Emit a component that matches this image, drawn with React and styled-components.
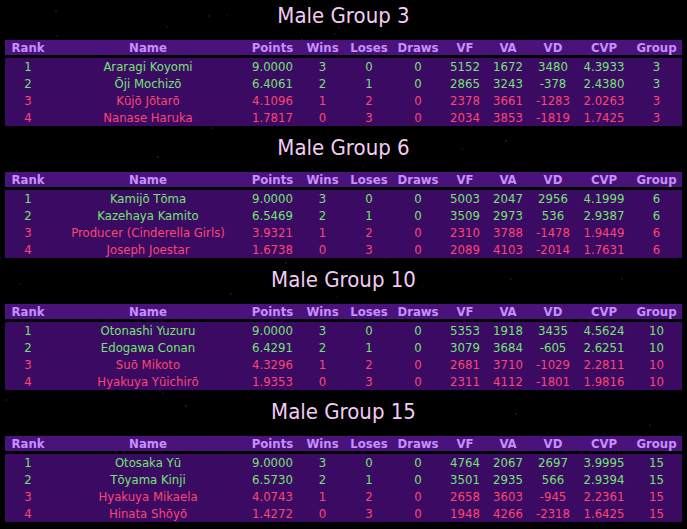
import React from 'react'
import styled, { createGlobalStyle } from 'styled-components'

// faint star dots for the page background
const stars = (() => {
  let seed = 7
  const rnd = () => {
    seed = (seed * 9301 + 49297) % 233280
    return seed / 233280
  }
  const dots = []
  for (let i = 0; i < 110; i++) {
    const x = Math.round(rnd() * 687)
    const y = Math.round(rnd() * 529)
    const a = (0.15 + rnd() * 0.35).toFixed(2)
    dots.push(
      `radial-gradient(circle at ${x}px ${y}px, rgba(200,200,220,${a}) 0, rgba(200,200,220,0) 1px)`,
    )
  }
  return dots.join(',')
})()

const GlobalStyle = createGlobalStyle`
  html, body {
    margin: 0;
    padding: 0;
    background-color: #000;
  }
  body {
    min-height: 529px;
    background-image: ${stars};
    font-family: 'DejaVu Sans Condensed', 'DejaVu Sans', sans-serif;
  }
`

//#region styles
const Page = styled.div`
  width: 687px;
  display: flex;
  flex-direction: column;
`

const Section = styled.section`
  display: flex;
  flex-direction: column;
  align-items: center;
  margin-bottom: 6px;
`

const Title = styled.h2`
  margin: 0 0 8px;
  height: 32px;
  line-height: 32px;
  font-size: 22px;
  font-weight: normal;
  color: #f3cbf3;
  text-align: center;
`

const Table = styled.table`
  width: 677px;
  table-layout: fixed;
  border-collapse: separate;
  border-spacing: 0;
  font-size: 13px;
  text-align: center;
`

const Head = styled.th`
  height: 15px;
  line-height: 15px;
  padding: 0;
  font-weight: bold;
  color: #c68ffb;
  background: #4a137c;
  border-bottom: 3px solid #000;
  white-space: nowrap;
`

const Row = styled.tr`
  color: ${(p) => (p.$up ? '#76e276' : '#fc4674')};
`

const Cell = styled.td`
  height: 17px;
  line-height: 17px;
  padding: 0;
  background: #3b0a62;
  white-space: nowrap;
`
//#endregion

const columns = [
  ['Rank', 46],
  ['Name', 194],
  ['Points', 55],
  ['Wins', 45],
  ['Loses', 48],
  ['Draws', 50],
  ['VF', 44],
  ['VA', 42],
  ['VD', 48],
  ['CVP', 54],
  ['Group', 51],
]

const groups = [
  {
    id: 3,
    rows: [
      ['Araragi Koyomi', '9.0000', 3, 0, 0, 5152, 1672, 3480, '4.3933'],
      ['Ōji Mochizō', '6.4061', 2, 1, 0, 2865, 3243, -378, '2.4380'],
      ['Kūjō Jōtarō', '4.1096', 1, 2, 0, 2378, 3661, -1283, '2.0263'],
      ['Nanase Haruka', '1.7817', 0, 3, 0, 2034, 3853, -1819, '1.7425'],
    ],
  },
  {
    id: 6,
    rows: [
      ['Kamijō Tōma', '9.0000', 3, 0, 0, 5003, 2047, 2956, '4.1999'],
      ['Kazehaya Kamito', '6.5469', 2, 1, 0, 3509, 2973, 536, '2.9387'],
      ['Producer (Cinderella Girls)', '3.9321', 1, 2, 0, 2310, 3788, -1478, '1.9449'],
      ['Joseph Joestar', '1.6738', 0, 3, 0, 2089, 4103, -2014, '1.7631'],
    ],
  },
  {
    id: 10,
    rows: [
      ['Otonashi Yuzuru', '9.0000', 3, 0, 0, 5353, 1918, 3435, '4.5624'],
      ['Edogawa Conan', '6.4291', 2, 1, 0, 3079, 3684, -605, '2.6251'],
      ['Suō Mikoto', '4.3296', 1, 2, 0, 2681, 3710, -1029, '2.2811'],
      ['Hyakuya Yūichirō', '1.9353', 0, 3, 0, 2311, 4112, -1801, '1.9816'],
    ],
  },
  {
    id: 15,
    rows: [
      ['Otosaka Yū', '9.0000', 3, 0, 0, 4764, 2067, 2697, '3.9995'],
      ['Tōyama Kinji', '6.5730', 2, 1, 0, 3501, 2935, 566, '2.9394'],
      ['Hyakuya Mikaela', '4.0743', 1, 2, 0, 2658, 3603, -945, '2.2361'],
      ['Hinata Shōyō', '1.4272', 0, 3, 0, 1948, 4266, -2318, '1.6425'],
    ],
  },
]

function GroupTable({ group }) {
  return (
    <Section>
      <Title>Male Group {group.id}</Title>
      <Table>
        <colgroup>
          {columns.map(([label, width]) => (
            <col key={label} style={{ width }} />
          ))}
        </colgroup>
        <thead>
          <tr>
            {columns.map(([label]) => (
              <Head key={label}>{label}</Head>
            ))}
          </tr>
        </thead>
        <tbody>
          {group.rows.map((row, i) => (
            <Row key={row[0]} $up={i < 2}>
              <Cell>{i + 1}</Cell>
              {row.map((value, j) => (
                <Cell key={j}>{value}</Cell>
              ))}
              <Cell>{group.id}</Cell>
            </Row>
          ))}
        </tbody>
      </Table>
    </Section>
  )
}

export default function App() {
  return (
    <Page>
      <GlobalStyle />
      {groups.map((g) => (
        <GroupTable key={g.id} group={g} />
      ))}
    </Page>
  )
}
